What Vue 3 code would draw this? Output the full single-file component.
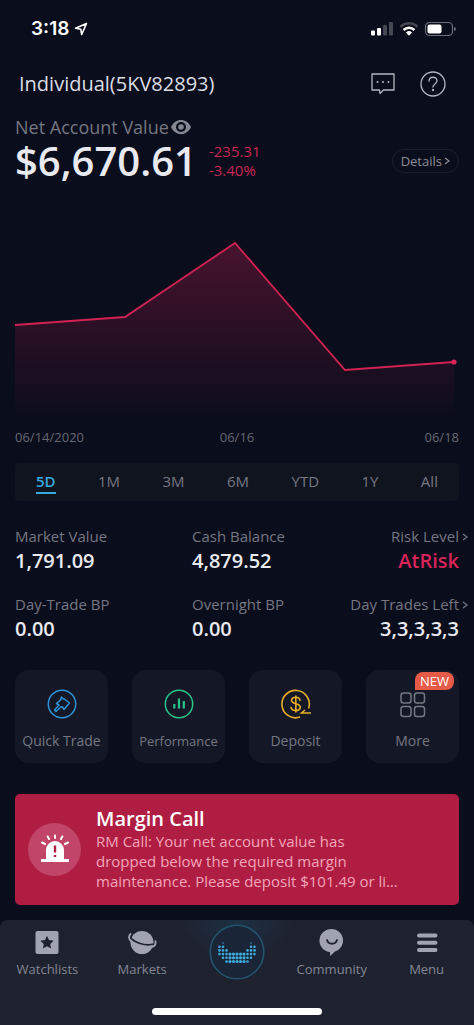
<script setup>
const points = [
  [0, 85],
  [110, 77],
  [220, 3],
  [330, 130],
  [439, 122]
]
const line = points.map((p) => p.join(',')).join(' ')
const area = `0,180 ${line} 439,180`

const ranges = ['5D', '1M', '3M', '6M', 'YTD', '1Y', 'All']

const stats = [
  { label: 'Market Value', value: '1,791.09' },
  { label: 'Cash Balance', value: '4,879.52' },
  { label: 'Risk Level', value: 'AtRisk', link: true, risk: true },
  { label: 'Day-Trade BP', value: '0.00' },
  { label: 'Overnight BP', value: '0.00' },
  { label: 'Day Trades Left', value: '3,3,3,3,3', link: true }
]

// Dot columns of the crescent logo: [first row, last row] for each column
const columns = [
  [1, 3], [0, 4], [2, 5], [3, 5], [3, 5], [3, 5],
  [3, 5], [3, 5], [2, 5], [0, 4], [1, 3]
]
const dots = columns.flatMap(([from, to], c) => {
  const list = []
  for (let r = from; r <= to; r++) {
    const central = r > 2 && c > 2 && c < 8
    list.push({ x: 10.5 + c * 3.5, y: 19 + r * 3.7, r: r === 0 ? 0.7 : central ? 1.6 : 1.3 })
  }
  return list
})
</script>

<template>
  <div class="app">
    <div class="status">
      <div class="time">
        <span>3:18</span>
        <svg width="14" height="14" viewBox="0 0 14 14" fill="none" stroke="#fff" stroke-width="1.6" stroke-linejoin="round">
          <path d="M12.5 1.5 1.5 6.3l5.3.9.9 5.3z" />
        </svg>
      </div>
      <svg width="86" height="16" viewBox="0 0 86 16">
        <g fill="#fff">
          <rect x="0" y="9.5" width="4" height="5" rx="1" />
          <rect x="6" y="7" width="4" height="7.5" rx="1" />
        </g>
        <g fill="#454751">
          <rect x="12" y="4" width="4" height="10.5" rx="1" />
          <rect x="18" y="1" width="4" height="13.5" rx="1" />
        </g>
        <g fill="none" stroke="#fff" stroke-width="2.6">
          <path d="M29.5 5.8a12 12 0 0 1 17 0" stroke="#454751" />
          <path d="M32.6 9a7.6 7.6 0 0 1 10.8 0" />
        </g>
        <path d="M35 11.5a4.3 4.3 0 0 1 6 0l-3 3.2z" fill="#fff" />
        <rect x="54.5" y="1.5" width="27" height="13" rx="4" fill="none" stroke="#6d6f78" stroke-width="1.2" />
        <rect x="56.5" y="3.5" width="14" height="9" rx="2" fill="#fff" />
        <path d="M83 6v4q2-.5 2-2t-2-2" fill="#6d6f78" />
      </svg>
    </div>

    <header class="header">
      <h1>Individual(5KV82893)</h1>
      <div class="header-actions">
        <button type="button" aria-label="Messages">
          <svg width="26" height="26" viewBox="0 0 26 26" fill="none" stroke="#b4b6c0" stroke-width="1.3" stroke-linejoin="round">
            <path d="M2 3h22v16H13.500L10 22.500 9.500 19H2z" />
            <g fill="#b4b6c0" stroke="none">
              <circle cx="7.5" cy="11" r="1" /><circle cx="13" cy="11" r="1" /><circle cx="18.5" cy="11" r="1" />
            </g>
          </svg>
        </button>
        <button type="button" aria-label="Help">
          <svg width="26" height="26" viewBox="0 0 26 26" fill="none" stroke="#b4b6c0" stroke-width="1.3" stroke-linecap="round">
            <circle cx="13" cy="13" r="12" />
            <path d="M9 10.2c0-5.200 8-5.200 8-.4 0 3.200-4 3-4 6.200" />
            <circle cx="13" cy="19" r=".5" fill="#b4b6c0" />
          </svg>
        </button>
      </div>
    </header>

    <main>
      <section class="account">
        <div class="account-label">
          <span>Net Account Value</span>
          <svg width="22" height="18" viewBox="0 0 22 18">
            <path d="M1 9C5-.5 17-.5 21 9 17 18.500 5 18.500 1 9" fill="#858791" />
            <circle cx="11" cy="9" r="5" fill="#0a0d1c" />
            <circle cx="11" cy="9" r="2.8" fill="#858791" />
          </svg>
        </div>
        <div class="account-row">
          <strong>$6,670.61</strong>
          <div class="change"><span>-235.31</span><span>-3.40%</span></div>
          <button type="button" class="details">
            Details
            <svg width="6" height="8" viewBox="0 0 6 8"><path d="M1 1l4 3-4 3" fill="none" stroke="currentColor" stroke-width="1.2" /></svg>
          </button>
        </div>
      </section>

      <section class="chart">
        <svg viewBox="0 0 444 184">
          <defs>
            <linearGradient id="fade" x1="0" y1="0" x2="0" y2="1">
              <stop offset="0" stop-color="#d8205a" stop-opacity=".3" />
              <stop offset="1" stop-color="#d8205a" stop-opacity="0" />
            </linearGradient>
          </defs>
          <polygon :points="area" fill="url(#fade)" />
          <polyline :points="line" fill="none" stroke="#d12353" stroke-width="1.8" />
          <circle cx="439" cy="122" r="2.6" fill="#e0245a" />
        </svg>
        <div class="dates"><span>06/14/2020</span><span>06/16</span><span>06/18</span></div>
      </section>

      <div class="ranges">
        <button v-for="(r, i) in ranges" :key="r" type="button" :class="{ active: i === 0 }"><span>{{ r }}</span></button>
      </div>

      <dl class="stats">
        <div v-for="s in stats" :key="s.label" class="stat">
          <dt>
            {{ s.label }}
            <svg v-if="s.link" width="6" height="8" viewBox="0 0 6 8"><path d="M1 1l4 3-4 3" fill="none" stroke="currentColor" stroke-width="1.2" /></svg>
          </dt>
          <dd :class="{ risk: s.risk }">{{ s.value }}</dd>
        </div>
      </dl>

      <div class="tiles">
        <button type="button" class="tile">
          <svg width="32" height="32" viewBox="0 0 32 32" fill="none" stroke="#2f93d8" stroke-width="1.5" stroke-linejoin="round">
            <circle cx="16" cy="16" r="13.7" />
            <path d="M15.500 9q1 2 3.500 2.500l4.500 3.500-5.500 6.500-1.500-2.500-1.500-.2-5 4.700-1.500-1.500 4.500-5-2.500-1.500 4-3.500z" />
          </svg>
          Quick Trade
        </button>
        <button type="button" class="tile tile-long">
          <svg width="32" height="32" viewBox="0 0 32 32" fill="none" stroke="#29c489">
            <circle cx="16" cy="16" r="13.7" stroke-width="1.5" />
            <path d="M11.3 16v4.500M16 10.500v10M20.800 13v7.500" stroke-width="2.2" />
          </svg>
          Performance
        </button>
        <button type="button" class="tile">
          <svg width="32" height="32" viewBox="0 0 32 32" fill="none" stroke="#e5ad27" stroke-width="1.6">
            <path d="M20 29.1A13.700 13.700 0 1 1 28.600 20.500" />
            <path d="M20 13c0-4.800-8.500-4.800-8.500-.8 0 4.300 8.800 2.600 8.800 7 0 4.500-9.300 4.500-9.300-.4M15.800 7.500v17" />
            <path d="M31 25h-9.500l3.500-3" />
          </svg>
          Deposit
        </button>
        <button type="button" class="tile">
          <svg width="32" height="32" viewBox="0 0 32 32" fill="none" stroke="#757782" stroke-width="1.5">
            <rect x="4" y="5" width="10" height="10" rx="2.5" /><rect x="17.5" y="5" width="10" height="10" rx="2.5" />
            <rect x="4" y="18.5" width="10" height="10" rx="2.5" /><rect x="17.5" y="18.5" width="10" height="10" rx="2.5" />
          </svg>
          More
          <span class="badge">NEW</span>
        </button>
      </div>

      <section class="alert">
        <div class="alert-icon">
          <svg width="28" height="30" viewBox="0 0 28 30">
            <path d="M5 25V16a9 9 0 0 1 18 0v9h4a1 1 0 0 1 0 3H1a1 1 0 0 1 0-3z" fill="#fff" />
            <path d="M14 1.500v2.500M6.700 2.500l1.300 2.500M21.300 2.500L20 5M1 8.500l3 1.500M27 8.500L24 10" stroke="#fff" stroke-width="2" stroke-linecap="round" />
            <path d="M14 11.500v7M14 21v2" stroke="#b01d43" stroke-width="2.4" />
          </svg>
        </div>
        <div class="alert-text">
          <h2>Margin Call</h2>
          <p>RM Call: Your net account value has dropped below the required margin maintenance. Please deposit $101.49 or li…</p>
        </div>
      </section>
    </main>

    <nav class="nav">
      <a href="#watchlists">
        <svg width="28" height="28" viewBox="0 0 28 28">
          <rect x="2.5" y="3" width="23" height="23" rx="2" fill="#a1a4b0" />
          <path d="M14 7.800l2 4.300 4.700.6-3.500 3.200.9 4.700-4.100-2.300-4.100 2.300.9-4.700-3.500-3.200 4.700-.6z" fill="#1e222f" />
        </svg>
        Watchlists
      </a>
      <a href="#markets">
        <svg width="30" height="28" viewBox="0 0 30 28">
          <circle cx="15" cy="14.5" r="11.5" fill="#a1a4b0" />
          <path d="M3 9C7 14.500 18 18.500 27 16" fill="none" stroke="#1e222f" stroke-width="1.8" />
          <path d="M4 5.500C-2 11 7 17 15 18.500S30 20 28.300 12.500" fill="none" stroke="#a1a4b0" stroke-width="1.8" />
        </svg>
        Markets
      </a>
      <a href="#home" class="home" aria-label="Home">
        <svg width="56" height="56" viewBox="0 0 56 56">
          <circle cx="28" cy="28" r="26.8" fill="#1a2637" stroke="#23536f" stroke-width="1.6" />
          <circle v-for="(d, i) in dots" :key="i" :cx="d.x" :cy="d.y" :r="d.r" fill="#3dabdc" />
        </svg>
      </a>
      <a href="#community">
        <svg width="28" height="28" viewBox="0 0 28 28">
          <path d="M14 1a11.500 11.500 0 0 1 3 22.500L12 28v-4A11.500 11.500 0 0 1 14 1" fill="#a1a4b0" />
          <path d="M9 12c1.500 5 8.500 5 10 0" fill="none" stroke="#1e222f" stroke-width="1.8" stroke-linecap="round" />
        </svg>
        Community
      </a>
      <a href="#menu">
        <svg width="28" height="28" viewBox="0 0 28 28" stroke="#a1a4b0" stroke-width="4" stroke-linecap="round">
          <path d="M6 7.500h16.500M6 14.800h16.500M6 22h16.500" />
        </svg>
        Menu
      </a>
      <div class="indicator"></div>
    </nav>
  </div>
</template>

<style>
body {
  background: #0a0d1b;
}
</style>

<style scoped>
.app {
  min-height: 100vh;
  display: flex;
  flex-direction: column;
  background: #0a0d1b;
  color: #e9eaf0;
  font-family: "Open Sans", "Noto Sans", sans-serif;
  font-size: 15px;
}
h1, h2, p, dl, dd {
  margin: 0;
}
button {
  border: 0;
  padding: 0;
  background: none;
  color: inherit;
  font: inherit;
}
svg {
  display: block;
  flex: none;
}
.status {
  display: flex;
  justify-content: space-between;
  align-items: center;
  height: 58px;
  padding: 0 17px 0 31px;
}
.time {
  display: flex;
  align-items: center;
  gap: 5px;
  font: 600 19px/24px Inter, sans-serif;
  color: #fff;
}
.header {
  display: flex;
  align-items: center;
  justify-content: space-between;
  height: 52px;
  padding: 0 28px 0 19px;
}
h1 {
  font-size: 20px;
  line-height: 28px;
  font-weight: 400;
  color: #dcdee6;
}
.header-actions {
  display: flex;
  gap: 24px;
}
main {
  flex: 1;
  padding: 6px 15px 0;
}
.account-label {
  display: flex;
  align-items: center;
  gap: 1px;
  font-size: 18px;
  line-height: 22px;
  color: #757782;
}
.account-row {
  display: flex;
  align-items: center;
  height: 46px;
}
.account-row strong {
  font-size: 40px;
  line-height: 44px;
  font-weight: 600;
}
.change {
  display: flex;
  flex-direction: column;
  margin-left: 12px;
  font-size: 15px;
  line-height: 19px;
  color: #c32855;
}
.details {
  display: flex;
  align-items: center;
  gap: 2px;
  height: 24px;
  margin-left: auto;
  padding: 0 8px;
  border: 1px solid #1c1f2d;
  border-radius: 12px;
  font-size: 13px;
  color: #8b8d97;
}
.chart {
  padding-top: 56px;
}
.chart > svg {
  width: 100%;
  height: auto;
}
.dates {
  display: flex;
  justify-content: space-between;
  padding-top: 4px;
  font-size: 13px;
  line-height: 18px;
  color: #666873;
}
.dates span {
  flex: 1;
}
.dates span:nth-child(2) {
  text-align: center;
}
.dates span:last-child {
  text-align: right;
}
.ranges {
  display: flex;
  justify-content: space-between;
  height: 38px;
  margin-top: 17px;
  padding: 0 21px;
  border-radius: 4px;
  background: #10141f;
  font-size: 15px;
  color: #757782;
}
.ranges span {
  display: block;
  line-height: 22px;
  border-bottom: 2px solid transparent;
}
.ranges .active {
  font-weight: 600;
  color: #36abdf;
}
.ranges .active span {
  border-color: #36abdf;
}
.stats {
  display: grid;
  grid-template-columns: 177px 1fr auto;
  row-gap: 18px;
  margin-top: 24px;
}
.stat:nth-child(3n) {
  text-align: right;
}
dt {
  position: relative;
  font-size: 15px;
  line-height: 22px;
  color: #757782;
}
dt svg {
  position: absolute;
  right: -9px;
  top: 8px;
}
dd {
  font-size: 20px;
  line-height: 28px;
  font-weight: 600;
}
.risk {
  color: #d82459;
}
.tiles {
  display: grid;
  grid-template-columns: repeat(4, 1fr);
  gap: 24px;
  margin-top: 27px;
}
.tile {
  position: relative;
  display: flex;
  flex-direction: column;
  align-items: center;
  gap: 12px;
  height: 93px;
  padding-top: 18px;
  border-radius: 14px;
  background: #141826;
  font-size: 14px;
  line-height: 18px;
  color: #757782;
  white-space: nowrap;
}
.tile-long {
  font-size: 13px;
}
.badge {
  position: absolute;
  top: 2px;
  right: 5px;
  padding: 0 5px;
  border-radius: 8px 8px 8px 0;
  background: #e65a48;
  color: #fff;
  font-size: 13px;
}
.alert {
  display: flex;
  align-items: center;
  gap: 15px;
  margin: 31px 0 15px;
  padding: 13px 13px 14px;
  border-radius: 5px;
  background: #b01d43;
}
.alert-icon {
  display: grid;
  place-items: center;
  flex: none;
  width: 53px;
  height: 53px;
  border-radius: 50%;
  background: #c04568;
}
.alert-text {
  padding-right: 40px;
}
h2 {
  font-size: 20px;
  line-height: 24px;
  font-weight: 600;
  color: #fff;
}
p {
  font-size: 15px;
  line-height: 20px;
  color: #f3a5b9;
}
.nav {
  position: relative;
  display: grid;
  grid-template-columns: repeat(5, 1fr);
  align-items: start;
  height: 105px;
  border-radius: 8px 8px 0 0;
  background: radial-gradient(ellipse 56px 40px at 50% 0, #1d3145, #1e222f);
}
.nav a {
  display: flex;
  flex-direction: column;
  align-items: center;
  gap: 4px;
  padding-top: 8px;
  font-size: 13px;
  line-height: 18px;
  color: #848793;
  text-decoration: none;
}
.nav .home {
  padding-top: 4px;
}
.indicator {
  position: absolute;
  bottom: 10px;
  left: 32%;
  right: 32%;
  height: 7px;
  border-radius: 4px;
  background: #fff;
}
</style>
